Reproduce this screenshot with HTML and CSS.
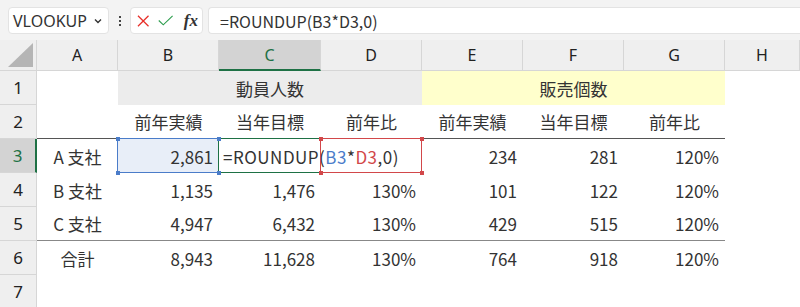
FILE: index.html
```html
<!DOCTYPE html>
<html lang="ja">

<head>
    <meta charset="UTF-8">
    <title>ROUNDUP</title>
    <link rel="stylesheet" href="styles.css">
</head>

<body>
    <div class="toolbar">
        <div class="namebox">
            <span>VLOOKUP</span>
            <svg class="chevron" width="8" height="6" viewBox="0 0 8 6"><path d="M1 1.5 L4 4.5 L7 1.5" fill="none" stroke="#333" stroke-width="1.4"/></svg>
        </div>
        <div class="grip"><i></i><i></i><i></i></div>
        <div class="fxbox">
            <svg width="13" height="12" viewBox="0 0 13 12"><path d="M1 0.5 L12 11.5 M12 0.5 L1 11.5" stroke="#e8302a" stroke-width="1.3"/></svg>
            <svg width="16" height="11" viewBox="0 0 16 11"><path d="M0.8 5.5 L5.5 10 L15.2 0.6" fill="none" stroke="#2f9e4f" stroke-width="1.2"/></svg>
            <span class="fx">fx</span>
        </div>
        <div class="formula">=ROUNDUP(B3*D3,0)</div>
    </div>

    <div class="sheet">
        <!-- 列見出し -->
        <div class="corner"><span class="tri"></span></div>
        <div class="colhead">A</div>
        <div class="colhead">B</div>
        <div class="colhead active">C</div>
        <div class="colhead">D</div>
        <div class="colhead">E</div>
        <div class="colhead">F</div>
        <div class="colhead">G</div>
        <div class="colhead">H</div>

        <!-- 1 -->
        <div class="rowhead">1</div>
        <div class="cell"></div>
        <div class="cell band gray">動員人数</div>
        <div class="cell band yellow">販売個数</div>
        <div class="cell"></div>

        <!-- 2 -->
        <div class="rowhead">2</div>
        <div class="cell line-dark"></div>
        <div class="cell center line-dark">前年実績</div>
        <div class="cell center line-dark">当年目標</div>
        <div class="cell center line-dark">前年比</div>
        <div class="cell center line-dark">前年実績</div>
        <div class="cell center line-dark">当年目標</div>
        <div class="cell center line-dark">前年比</div>
        <div class="cell"></div>

        <!-- 3 -->
        <div class="rowhead active">3</div>
        <div class="cell center">A 支社</div>
        <div class="cell num sel blue">2,861<span class="handle tl"></span><span class="handle tr"></span><span class="handle bl"></span><span class="handle br"></span></div>
        <div class="cell editing sel green">=ROUNDUP(<span class="ref-b">B3</span>*<span class="ref-d">D3</span>,0)<span class="caret"></span></div>
        <div class="cell num sel red"><span class="handle tl"></span><span class="handle tr"></span><span class="handle bl"></span><span class="handle br"></span></div>
        <div class="cell num">234</div>
        <div class="cell num">281</div>
        <div class="cell num">120%</div>
        <div class="cell"></div>

        <!-- 4 -->
        <div class="rowhead">4</div>
        <div class="cell center">B 支社</div>
        <div class="cell num">1,135</div>
        <div class="cell num">1,476</div>
        <div class="cell num">130%</div>
        <div class="cell num">101</div>
        <div class="cell num">122</div>
        <div class="cell num">120%</div>
        <div class="cell"></div>

        <!-- 5 -->
        <div class="rowhead">5</div>
        <div class="cell center line-gray">C 支社</div>
        <div class="cell num line-gray">4,947</div>
        <div class="cell num line-gray">6,432</div>
        <div class="cell num line-gray">130%</div>
        <div class="cell num line-gray">429</div>
        <div class="cell num line-gray">515</div>
        <div class="cell num line-gray">120%</div>
        <div class="cell"></div>

        <!-- 6 -->
        <div class="rowhead">6</div>
        <div class="cell center">合計</div>
        <div class="cell num">8,943</div>
        <div class="cell num">11,628</div>
        <div class="cell num">130%</div>
        <div class="cell num">764</div>
        <div class="cell num">918</div>
        <div class="cell num">120%</div>
        <div class="cell"></div>

        <!-- 7 -->
        <div class="rowhead">7</div>
        <div class="cell"></div>
        <div class="cell"></div>
        <div class="cell"></div>
        <div class="cell"></div>
        <div class="cell"></div>
        <div class="cell"></div>
        <div class="cell"></div>
        <div class="cell"></div>
    </div>
</body>

</html>
```

FILE: styles.css
```css
* {
    box-sizing: border-box;
}

body {
    margin: 0;
    background: #fff;
    color: #333;
    font-family: "Noto Sans CJK JP", sans-serif;
    overflow: hidden;
}

/* 数式バー */
.toolbar {
    height: 40px;
    background: #f3f3f3;
    display: flex;
    align-items: flex-start;
    padding: 7px 0 0 8px;
}

.namebox,
.fxbox,
.formula {
    height: 27px;
    background: #fff;
    border: 1px solid #e3e3e3;
    border-radius: 4px;
    display: flex;
    align-items: center;
}

.namebox {
    width: 101px;
    padding: 0 6px 0 4px;
    justify-content: space-between;
    font-family: "Noto Sans", sans-serif;
    font-size: 16px;
    color: #333;
}

.grip {
    width: 21px;
    display: flex;
    flex-direction: column;
    align-items: center;
    gap: 2px;
    padding-top: 9px;
}

.grip i {
    width: 2px;
    height: 2px;
    background: #444;
}

.fxbox {
    width: 73px;
    padding: 0 4px 0 6px;
    gap: 9px;
}

.fx {
    font-family: "Liberation Serif", serif;
    font-style: italic;
    font-weight: bold;
    font-size: 17px;
    color: #333;
    margin-left: 1px;
}

.formula {
    flex: 1;
    margin-left: 5px;
    border-right: none;
    border-radius: 4px 0 0 4px;
    padding-left: 11px;
    font-size: 16px;
    color: #333;
}

/* シート */
.sheet {
    display: grid;
    grid-template-columns: 37px 81px 101px 102px 101px 101px 101px 101px 1fr;
    grid-template-rows: 31px repeat(7, 34px);
}

.corner {
    background: #efefef;
    border-right: 1px solid #d6d6d6;
    border-bottom: 1px solid #d6d6d6;
    position: relative;
}

.tri {
    position: absolute;
    right: 3px;
    bottom: 3px;
    width: 0;
    height: 0;
    border-left: 25px solid transparent;
    border-bottom: 24px solid #b5b5b5;
}

.colhead {
    background: #efefef;
    border-right: 1px solid #d6d6d6;
    border-bottom: 1px solid #d6d6d6;
    display: flex;
    align-items: center;
    justify-content: center;
    font-family: "Noto Sans", sans-serif;
    font-size: 16px;
    color: #222;
}

.colhead:last-child {
    border-right: none;
}

.colhead.active {
    background: #d3d3d3;
    border-bottom: 2px solid #1e7145;
    color: #1e7145;
}

.rowhead {
    background: #efefef;
    border-right: 1px solid #d6d6d6;
    border-bottom: 1px solid #d6d6d6;
    display: flex;
    align-items: center;
    justify-content: center;
    font-family: "Noto Sans", sans-serif;
    font-size: 17px;
    color: #222;
}

.rowhead.active {
    background: #d3d3d3;
    border-right: 2px solid #1e7145;
    color: #1e7145;
}

.cell {
    display: flex;
    align-items: center;
    font-size: 17px;
    color: #333;
    white-space: nowrap;
}

.center {
    justify-content: center;
}

.num {
    justify-content: flex-end;
    padding-right: 6px;
}

.band {
    grid-column: span 3;
    justify-content: center;
}

.band.gray {
    background: #ececec;
}

.band.yellow {
    background: #ffffcc;
}

.line-dark {
    border-bottom: 1px solid #555;
}

.line-gray {
    border-bottom: 1px solid #888;
}

/* 参照セルの枠 */
.sel {
    position: relative;
}

.sel::after {
    content: "";
    position: absolute;
    top: -1px;
    left: -1px;
    right: 0;
    bottom: 0;
    border: 1px solid var(--frame);
    pointer-events: none;
}

.blue {
    --frame: #4a7cc9;
    background: #e8eef8;
}

.green {
    --frame: #1e7145;
}

.red {
    --frame: #d2474a;
}

.handle {
    position: absolute;
    width: 4px;
    height: 4px;
    background: var(--frame);
    z-index: 1;
}

.tl { top: -2px; left: -2px; }
.tr { top: -2px; right: -2px; }
.bl { bottom: -2px; left: -2px; }
.br { bottom: -2px; right: -2px; }

.editing {
    padding-left: 4px;
    overflow: visible;
    letter-spacing: 0.5px;
}

.ref-b {
    color: #4a7cc9;
}

.ref-d {
    color: #d2474a;
}

.caret {
    display: inline-block;
    width: 1px;
    height: 26px;
    background: #bdbdbd;
    margin-left: 2px;
}
```
